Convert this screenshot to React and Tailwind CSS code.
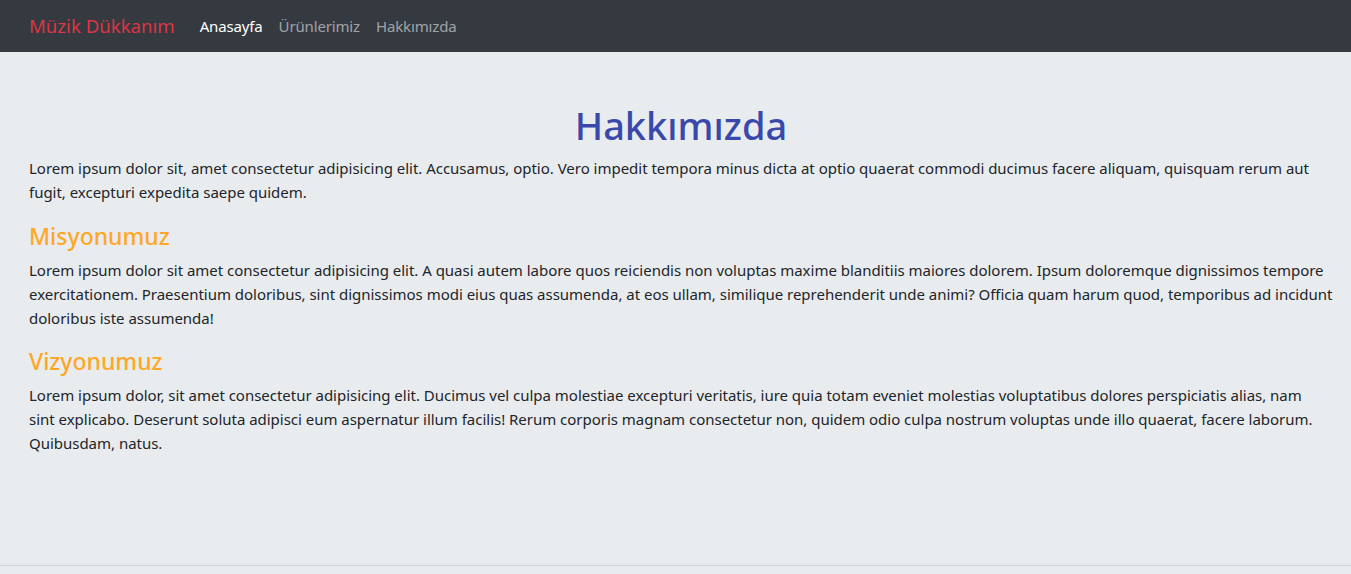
import React from 'react';

const font = { fontFamily: '"Noto Sans", "Open Sans", sans-serif' };

const Navbar = () => (
  <nav className="bg-[#343a40] h-[52px] flex items-center px-[29px]">
    <a href="#" className="text-[#dc3545] text-[18.6px] mr-[25px] leading-none">Müzik Dükkanım</a>
    <ul className="flex gap-[16px] text-[15px] tracking-[-0.15px] leading-none">
      <li><a href="#" className="text-white">Anasayfa</a></li>
      <li><a href="#" className="text-[#ffffff8c]">Ürünlerimiz</a></li>
      <li><a href="#" className="text-[#ffffff8c]">Hakkımızda</a></li>
    </ul>
  </nav>
);

const App = () => {
  return (
    <div className="bg-[#e9ecef] min-h-[574px] text-[#212529]" style={font}>
      <Navbar />
      <main className="h-[514px] border-b border-[#ced4da] pl-[29px] pr-[18px] pt-[45px]">
        <h1 className="text-center text-[#3949ab] text-[38px] font-medium leading-[56px] mb-[3px]">Hakkımızda</h1>
        <p className="text-[15px] leading-[24px] tracking-[-0.02px]">
          Lorem ipsum dolor sit, amet consectetur adipisicing elit. Accusamus, optio. Vero impedit tempora minus dicta at optio quaerat commodi ducimus facere aliquam, quisquam rerum aut fugit, excepturi expedita saepe quidem.
        </p>
        <h3 className="text-[#ffa726] text-[23px] font-medium leading-[29px] mt-[18px] mb-[7px]">Misyonumuz</h3>
        <p className="text-[15px] leading-[24px] tracking-[-0.02px]">
          Lorem ipsum dolor sit amet consectetur adipisicing elit. A quasi autem labore quos reiciendis non voluptas maxime blanditiis maiores dolorem. Ipsum doloremque dignissimos tempore exercitationem. Praesentium doloribus, sint dignissimos modi eius quas assumenda, at eos ullam, similique reprehenderit unde animi? Officia quam harum quod, temporibus ad incidunt doloribus iste assumenda!
        </p>
        <h3 className="text-[#ffa726] text-[23px] font-medium leading-[29px] mt-[17px] mb-[7px]">Vizyonumuz</h3>
        <p className="text-[15px] leading-[24px] tracking-[-0.02px]">
          Lorem ipsum dolor, sit amet consectetur adipisicing elit. Ducimus vel culpa molestiae excepturi veritatis, iure quia totam eveniet molestias voluptatibus dolores perspiciatis alias, nam sint{'\u00A0'}explicabo. Deserunt soluta adipisci eum aspernatur illum facilis! Rerum corporis magnam consectetur non, quidem odio culpa nostrum voluptas unde illo quaerat, facere laborum. Quibusdam, natus.
        </p>
      </main>
    </div>
  );
};

export default App;
